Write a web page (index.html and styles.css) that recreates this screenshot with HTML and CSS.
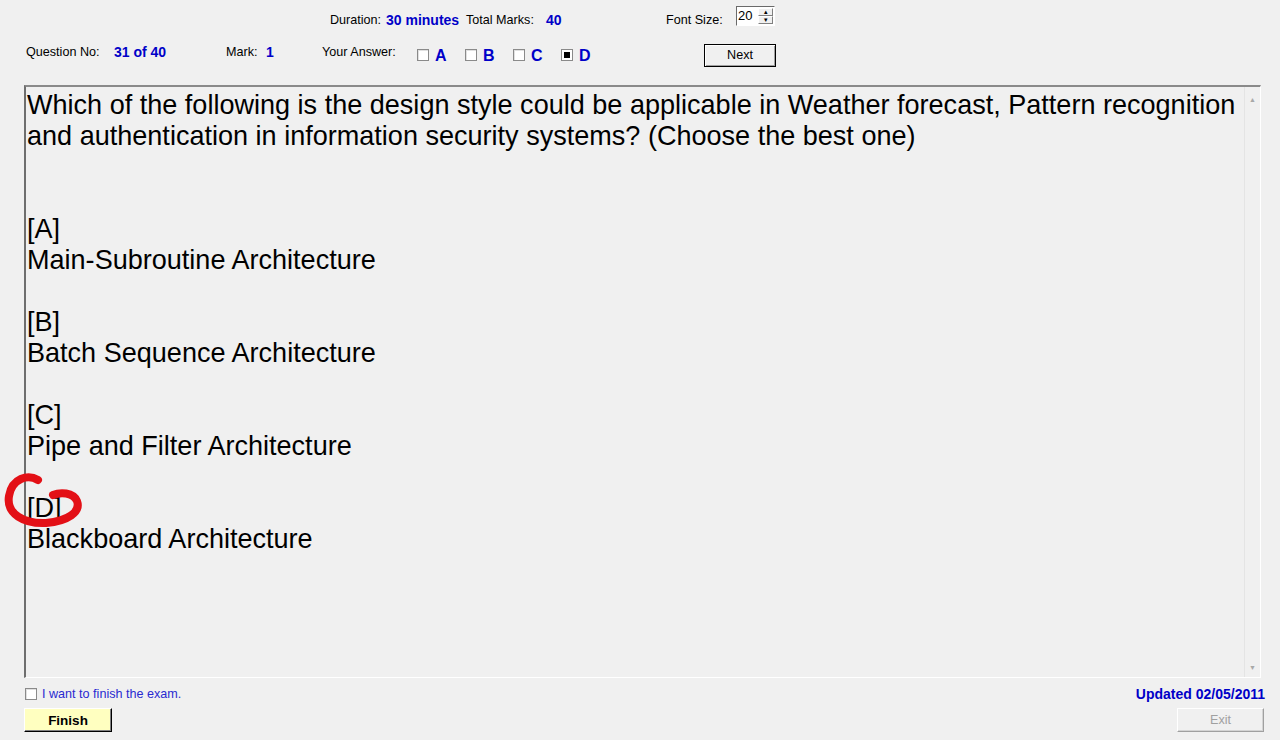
FILE: index.html
```html
<!DOCTYPE html>
<html>
<head>
<meta charset="utf-8">
<link rel="stylesheet" href="styles.css">
</head>
<body>
<div class="app">
  <div class="row1">
    <span class="lbl w-dur">Duration:</span>
    <span class="val w-durv">30 minutes</span>
    <span class="lbl w-tot">Total Marks:</span>
    <span class="val w-totv">40</span>
    <span class="lbl w-font">Font Size:</span>
    <span class="spin"><span class="spin-val">20</span><span class="spin-btns"><span class="sb">&#9652;</span><span class="sb">&#9662;</span></span></span>
  </div>
  <div class="row2">
    <span class="lbl up w-q">Question No:</span>
    <span class="val up w-qv">31 of 40</span>
    <span class="lbl up w-mark">Mark:</span>
    <span class="val up w-markv">1</span>
    <span class="lbl up w-ans">Your Answer:</span>
    <span class="opts">
      <span class="opt"><span class="cb"></span><span class="ol">A</span></span>
      <span class="opt"><span class="cb"></span><span class="ol">B</span></span>
      <span class="opt"><span class="cb"></span><span class="ol">C</span></span>
      <span class="opt"><span class="cb on"></span><span class="ol">D</span></span>
    </span>
    <button class="btn next">Next</button>
  </div>
  <div class="qbox">
    <div class="qtext">
      <div>Which of the following is the design style could be applicable in Weather forecast, Pattern recognition and authentication in information security systems? (Choose the best one)</div>
      <div class="blank"></div>
      <div class="blank"></div>
      <div>[A]</div>
      <div>Main-Subroutine Architecture</div>
      <div class="blank"></div>
      <div>[B]</div>
      <div>Batch Sequence Architecture</div>
      <div class="blank"></div>
      <div>[C]</div>
      <div>Pipe and Filter Architecture</div>
      <div class="blank"></div>
      <div class="dline">[D]<svg class="mark" width="90" height="65" viewBox="0 0 90 65"><path d="M38 12 C 28 6, 12 10, 9 28 C 6 46, 24 56, 46 55 C 68 53, 81 44, 77 33 C 73 24, 60 24, 53 27" fill="none" stroke="#e31016" stroke-width="8" stroke-linecap="round" stroke-linejoin="round"/></svg></div>
      <div>Blackboard Architecture</div>
    </div>
    <div class="vscroll">
      <span class="arr">&#9650;</span>
      <span class="arr">&#9660;</span>
    </div>
  </div>
  <div class="bottom1">
    <label class="finish-chk"><span class="cb"></span><span class="ft">I want to finish the exam.</span></label>
    <span class="updated">Updated 02/05/2011</span>
  </div>
  <div class="bottom2">
    <button class="btn finish">Finish</button>
    <button class="btn exit" disabled>Exit</button>
  </div>
</div>
</body>
</html>
```
FILE: styles.css
```css
* { box-sizing: border-box; }
html, body { margin: 0; padding: 0; }
body {
  background: #f0f0f0;
  font-family: "Liberation Sans", Arial, sans-serif;
  font-size: 12.6px;
  color: #000;
  width: 1280px;
  height: 740px;
  overflow: hidden;
}
.app { display: flex; flex-direction: column; }
.lbl { color: #000; flex: none; }
.val { color: #0000c8; font-weight: bold; font-size: 14px; flex: none; }

.row1 {
  height: 40px;
  display: flex;
  align-items: center;
  padding-left: 330px;
}
.w-dur { width: 56px; }
.w-durv { width: 80px; }
.w-tot { width: 80px; }
.w-totv { width: 120px; }
.w-font { width: 70px; }
.spin {
  display: flex;
  width: 39px;
  height: 20px;
  border: 1px solid #6a6a6a;
  border-right-color: #fff;
  border-bottom-color: #fff;
  background: #fff;
  margin-top: -9px;
}
.spin-val { font-size: 13px; padding-left: 1px; line-height: 18px; flex: 1; }
.spin-btns { display: flex; flex-direction: column; width: 16px; padding: 1px 1px 1px 0; }
.sb {
  flex: 1;
  background: #f0f0f0;
  border: 1px solid;
  border-color: #fff #808080 #808080 #fff;
  font-size: 7px;
  line-height: 6px;
  text-align: center;
  color: #000;
}

.row2 {
  height: 30px;
  display: flex;
  align-items: center;
  padding-left: 26px;
}
.up { margin-bottom: 6px; }
.w-q { width: 88px; }
.w-qv { width: 112px; }
.w-mark { width: 40px; }
.w-markv { width: 56px; }
.w-ans { width: 95px; }
.opts { display: flex; }
.opt { display: flex; align-items: center; width: 48px; }
.cb {
  display: inline-block;
  width: 12px;
  height: 12px;
  border: 1px solid #8a8a8a;
  background: #fff;
  box-shadow: inset 1px 1px 0 #e0e0e0;
  flex: none;
}
.cb.on { background: #000; box-shadow: inset 0 0 0 2px #fff; }
.ol { color: #0000c8; font-weight: bold; font-size: 16px; margin-left: 6px; margin-top: 2px; }
.btn {
  font-family: "Liberation Sans", Arial, sans-serif;
  font-size: 12.6px;
  background: #f0f0f0;
  border: 1px solid;
  border-color: #fff #696969 #696969 #fff;
  box-shadow: inset -1px -1px 0 #a0a0a0;
  padding: 0;
  color: #000;
}
.next {
  margin-left: 95px;
  width: 72px;
  height: 23px;
  border: 1px solid #000;
  box-shadow: inset 1px 1px 0 #fff, inset -1px -1px 0 #a0a0a0;
}

.qbox {
  margin-left: 24px;
  margin-top: 15px;
  width: 1237px;
  height: 593px;
  display: flex;
  border-top: 2px solid #8a8a8a;
  border-left: 2px solid #6e6e6e;
  border-right: 1px solid #fff;
  border-bottom: 1px solid #fff;
}
.qtext {
  flex: 1;
  padding: 3px 0 0 1px;
  font-size: 27.05px;
  line-height: 31px;
  color: #000;
}
.blank { height: 31px; }
.dline { position: relative; }
.mark { position: absolute; left: -27px; top: -25px; }
.vscroll {
  width: 16px;
  border-left: 1px solid #e4e4e4;
  display: flex;
  flex-direction: column;
  justify-content: space-between;
  align-items: center;
  color: #a8a8a8;
  font-size: 7px;
  padding: 9px 0 6px;
}

.bottom1 {
  display: flex;
  justify-content: space-between;
  align-items: center;
  height: 22px;
  margin-top: 5px;
  padding: 0 15px 0 25px;
}
.finish-chk { display: flex; align-items: center; }
.ft { color: #2a2ad0; margin-left: 5px; }
.updated { color: #0000c8; font-weight: bold; font-size: 14px; }
.bottom2 {
  display: flex;
  justify-content: space-between;
  padding: 0 16px 0 24px;
  margin-top: 3px;
}
.finish {
  width: 88px;
  height: 24px;
  background: #ffffc0;
  font-weight: bold;
  font-size: 13.5px;
  border-color: #fff #000 #000 #fff;
  box-shadow: inset -1px -1px 0 #808080;
}
.exit {
  width: 87px;
  height: 24px;
  color: #a0a0a0;
  border-color: #fff #a0a0a0 #a0a0a0 #fff;
  box-shadow: inset -1px -1px 0 #d4d4d4;
}
```
